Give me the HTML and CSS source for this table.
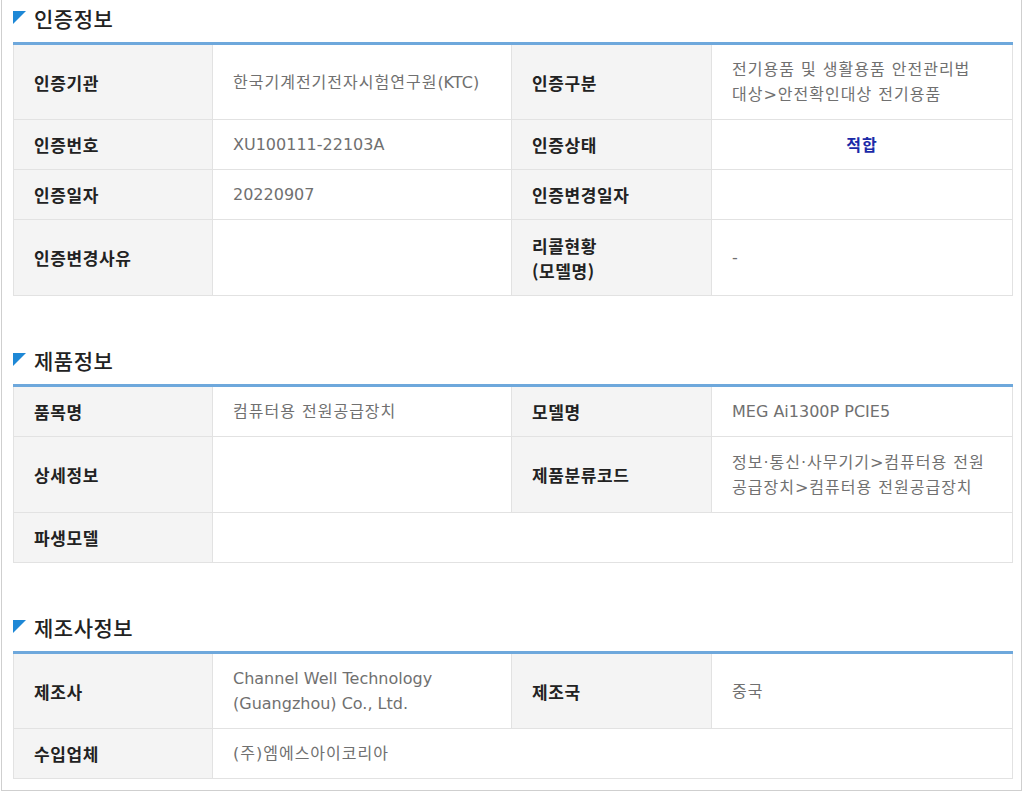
FILE: index.html
```html
<!DOCTYPE html>
<html lang="ko">
<head>
<meta charset="utf-8">
<title>인증정보</title>
<link rel="stylesheet" href="styles.css">
</head>
<body>
<div class="frame">
  <section class="sec">
    <h2 class="sec-title"><span class="tri"></span>인증정보</h2>
    <table class="info">
      <colgroup><col class="c-th"><col class="c-td"><col class="c-th2"><col class="c-td2"></colgroup>
      <tr class="tall">
        <th>인증기관</th><td>한국기계전기전자시험연구원<span class="lat">(KTC)</span></td>
        <th>인증구분</th><td>전기용품 및 생활용품 안전관리법<br>대상&gt;안전확인대상 전기용품</td>
      </tr>
      <tr>
        <th>인증번호</th><td class="lat">XU100111-22103A</td>
        <th>인증상태</th><td class="status">적합</td>
      </tr>
      <tr>
        <th>인증일자</th><td class="lat">20220907</td>
        <th>인증변경일자</th><td></td>
      </tr>
      <tr class="tall">
        <th>인증변경사유</th><td></td>
        <th>리콜현황<br>(모델명)</th><td>-</td>
      </tr>
    </table>
  </section>

  <section class="sec">
    <h2 class="sec-title"><span class="tri"></span>제품정보</h2>
    <table class="info">
      <colgroup><col class="c-th"><col class="c-td"><col class="c-th2"><col class="c-td2"></colgroup>
      <tr>
        <th>품목명</th><td>컴퓨터용 전원공급장치</td>
        <th>모델명</th><td class="lat">MEG Ai1300P PCIE5</td>
      </tr>
      <tr class="tall">
        <th>상세정보</th><td></td>
        <th>제품분류코드</th><td>정보·통신·사무기기&gt;컴퓨터용 전원<br>공급장치&gt;컴퓨터용 전원공급장치</td>
      </tr>
      <tr>
        <th>파생모델</th><td colspan="3"></td>
      </tr>
    </table>
  </section>

  <section class="sec">
    <h2 class="sec-title"><span class="tri"></span>제조사정보</h2>
    <table class="info">
      <colgroup><col class="c-th"><col class="c-td"><col class="c-th2"><col class="c-td2"></colgroup>
      <tr class="tall">
        <th>제조사</th><td class="lat">Channel Well Technology<br>(Guangzhou) Co., Ltd.</td>
        <th>제조국</th><td>중국</td>
      </tr>
      <tr>
        <th>수입업체</th><td colspan="3">(주)엠에스아이코리아</td>
      </tr>
    </table>
  </section>
</div>
</body>
</html>
```
FILE: styles.css
```css
* { box-sizing: border-box; }
html, body { margin: 0; padding: 0; background: #fff; }
body {
  font-family: "DejaVu Sans", "Noto Sans CJK KR", sans-serif;
  color: #222;
}
.frame {
  margin-left: 1px;
  width: 1021px;
  border: 1px solid #cfcfcf;
  border-top: none;
  padding: 3px 9px 11px 11px;
}
.sec + .sec { margin-top: 49px; }
.sec-title {
  margin: 0 0 9px 0;
  height: 30px;
  line-height: 30px;
  font-family: "Noto Sans CJK KR", sans-serif;
  font-size: 21px;
  letter-spacing: 0.5px;
  font-weight: 500;
  color: #222;
  display: flex;
  align-items: center;
}
.tri {
  width: 0; height: 0;
  border-top: 13px solid #1e88d6;
  border-right: 13px solid transparent;
  margin: 0 8px 0 0;
  position: relative;
  top: -1px;
}
.info {
  width: 999px;
  border-collapse: collapse;
  table-layout: fixed;
  border-top: 3px solid #6ea8dc;
}
.c-th { width: 199px; }
.c-td { width: 299px; }
.c-th2 { width: 200px; }
.c-td2 { width: 301px; }
.info th, .info td {
  border: 1px solid #e2e2e2;
  padding: 12px 20px;
  line-height: 25px;
  font-size: 16px;
  text-align: left;
  vertical-align: middle;
  height: 50px;
}
.info tr.tall th, .info tr.tall td { height: 76px; padding-top: 11px; padding-bottom: 11px; }
.info th {
  background: #f4f4f4;
  font-family: "Noto Sans CJK KR", sans-serif;
  font-weight: 700;
  font-size: 17px;
  letter-spacing: 0.6px;
  color: #222;
}
.info td {
  color: #707070;
  background: #fff;
  letter-spacing: 1px;
}
.info td.lat, .info .lat {
  letter-spacing: 0;
}
.info td.status {
  text-align: center;
  color: #1b2aa8;
  font-weight: 700;
  font-family: "Noto Sans CJK KR", sans-serif;
}
```
